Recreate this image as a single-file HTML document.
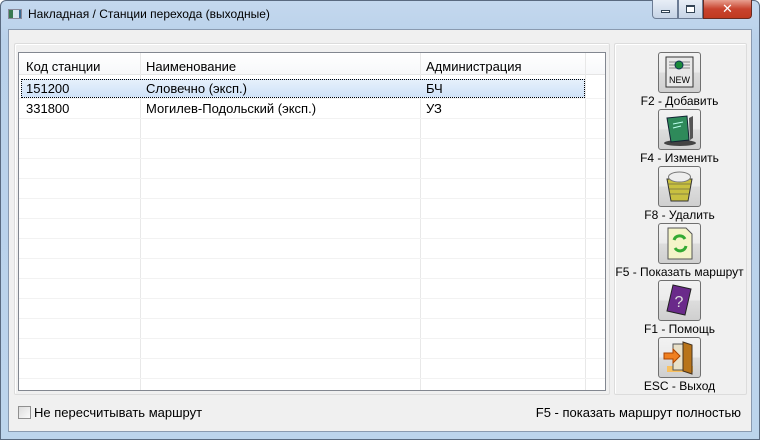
<!DOCTYPE html>
<html><head><meta charset="utf-8"><style>
*{margin:0;padding:0;box-sizing:border-box}
body{width:760px;height:440px;overflow:hidden;font-family:"Liberation Sans","DejaVu Sans",sans-serif;font-size:12px;color:#000;background:#fff}
.frame{position:absolute;left:0;top:0;width:760px;height:440px;background:linear-gradient(180deg,#c4d8ee 0,#b9d1ea 40px,#bcd4ec 100%);border:1px solid #5a6a80;border-radius:6px 6px 0 0}
.title{position:absolute;left:28px;top:7px;font-size:12px;color:#000}
.ticon{position:absolute;left:8px;top:9px;width:14px;height:10px;background:linear-gradient(90deg,#3a7a50 0,#3a7a50 4px,#d8e4ee 4px,#d8e4ee 10px,#3a6a90 10px);border:1px solid #889}
.client{position:absolute;left:8px;top:29px;width:744px;height:403px;background:#f0f0f0;border:1px solid #8a9ab0}
.panel{position:absolute;border:1px solid #dcdcdc;border-radius:2px;box-shadow:inset 1px 1px 0 #fff}
.grid{position:absolute;left:18px;top:52px;width:588px;height:339px;background:#fff;border:1px solid #828790;overflow:hidden;font-size:13px}
.vl{position:absolute;top:0;bottom:0;width:1px;background:#f0f0f0}
.hl{position:absolute;left:0;right:0;height:1px;background:#f2f2f2}
.hdr{position:absolute;top:0;left:0;right:0;height:22px;background:linear-gradient(#fff,#f7f8fa);border-bottom:1px solid #e5e5e5}
.t{position:absolute;white-space:nowrap}
.sel{position:absolute;left:2px;top:26px;width:564px;height:19px;background:linear-gradient(#e6f0fb,#cfe2f8);border:1px dotted #000}
.btn{position:absolute;left:658px;width:43px;height:41px;border:1px solid #707070;border-radius:3px;background:linear-gradient(#f2f2f2 0,#ebebeb 50%,#dddddd 50%,#cfcfcf 100%)}
.lbl{position:absolute;width:145px;text-align:center;left:607px;font-size:12px}
.winbtns{position:absolute;left:652px;top:0;width:100px;height:19px}
</style></head><body>
<div class="frame"></div>
<div class="ticon"></div>
<div class="title">Накладная / Станции перехода (выходные)</div>
<div class="winbtns">
 <div style="position:absolute;left:0;top:0;width:26px;height:19px;border:1px solid #6c7c94;border-top:none;border-radius:0 0 0 4px;background:linear-gradient(#e8eef6,#c6d4e6)"><div style="position:absolute;left:8px;top:10px;width:9px;height:3px;background:#fff;border:1px solid #345"></div></div>
 <div style="position:absolute;left:26px;top:0;width:25px;height:19px;border:1px solid #6c7c94;border-top:none;background:linear-gradient(#e8eef6,#c6d4e6)"><div style="position:absolute;left:7px;top:5px;width:9px;height:8px;border:1px solid #345;border-top-width:2px;background:#fff"></div></div>
 <div style="position:absolute;left:51px;top:0;width:49px;height:19px;border:1px solid #6a2a20;border-top:none;border-radius:0 0 4px 0;background:linear-gradient(#e8a090,#c8432e 50%,#c03a20);color:#fff;font-weight:bold;text-align:center;font-size:13px;line-height:17px">✕</div>
</div>
<div class="client"></div>
<div class="panel" style="left:14px;top:43px;width:596px;height:352px"></div>
<div class="panel" style="left:614px;top:43px;width:133px;height:352px"></div>
<div class="grid">
 <div class="hdr"></div>
 <div class="vl" style="left:121px;background:#e8e8e8"></div>
 <div class="vl" style="left:401px;background:#e8e8e8"></div>
 <div class="vl" style="left:566px;background:#e8e8e8"></div>
 <div class="hl" style="top:45px"></div><div class="hl" style="top:65px"></div><div class="hl" style="top:85px"></div><div class="hl" style="top:105px"></div><div class="hl" style="top:125px"></div><div class="hl" style="top:145px"></div><div class="hl" style="top:165px"></div><div class="hl" style="top:185px"></div><div class="hl" style="top:205px"></div><div class="hl" style="top:225px"></div><div class="hl" style="top:245px"></div><div class="hl" style="top:265px"></div><div class="hl" style="top:285px"></div><div class="hl" style="top:305px"></div><div class="hl" style="top:325px"></div>
 <div class="sel"></div>
 <div class="t" style="left:7px;top:6px">Код станции</div>
 <div class="t" style="left:127px;top:6px">Наименование</div>
 <div class="t" style="left:407px;top:6px">Администрация</div>
 <div class="t" style="left:7px;top:28px">151200</div>
 <div class="t" style="left:127px;top:28px">Словечно (эксп.)</div>
 <div class="t" style="left:407px;top:28px">БЧ</div>
 <div class="t" style="left:7px;top:48px">331800</div>
 <div class="t" style="left:127px;top:48px">Могилев-Подольский (эксп.)</div>
 <div class="t" style="left:407px;top:48px">УЗ</div>
</div>

<div class="btn" style="top:52px"><svg width="41" height="39"><rect x="7" y="4" width="27" height="30" fill="#e8e8e8" stroke="#333"/><g stroke="#888"><line x1="10" y1="9" x2="31" y2="9"/><line x1="10" y1="12" x2="31" y2="12"/><line x1="10" y1="15" x2="31" y2="15"/></g><circle cx="20" cy="12" r="4" fill="#1a8a3a" stroke="#135"/><text x="20.5" y="30" font-size="9" text-anchor="middle" font-family="Liberation Sans">NEW</text></svg></div>
<div class="lbl" style="top:94px">F2 - Добавить</div>
<div class="btn" style="top:109px"><svg width="41" height="39"><ellipse cx="21" cy="33" rx="16" ry="3" fill="#444"/><path d="M8 8 L28 6 L30 30 L12 32 Z" fill="#2e8a5a" stroke="#123"/><path d="M30 8 L34 6 L34 28 L31 30 Z" fill="#555"/><g stroke="#bfe" ><line x1="14" y1="14" x2="24" y2="12"/><line x1="14" y1="18" x2="22" y2="16"/></g></svg></div>
<div class="lbl" style="top:151px">F4 - Изменить</div>
<div class="btn" style="top:166px"><svg width="41" height="39"><path d="M8 12 L33 12 L29 34 L12 34 Z" fill="#c8c040" stroke="#333"/><g stroke="#444" stroke-width=".6"><line x1="9" y1="17" x2="32" y2="17"/><line x1="10" y1="22" x2="31" y2="22"/><line x1="11" y1="27" x2="30" y2="27"/></g><ellipse cx="20.5" cy="10" rx="11" ry="5" fill="#eee" stroke="#777"/></svg></div>
<div class="lbl" style="top:208px">F8 - Удалить</div>
<div class="btn" style="top:223px"><svg width="41" height="39"><path d="M9 4 L27 4 L33 10 L33 35 L9 35 Z" fill="#f4f4c8" stroke="#555"/><path d="M15 16 A6 6 0 0 1 26 15" stroke="#3a3" stroke-width="3" fill="none"/><path d="M27 22 A6 6 0 0 1 16 24" stroke="#3a3" stroke-width="3" fill="none"/></svg></div>
<div class="lbl" style="top:265px">F5 - Показать маршрут</div>
<div class="btn" style="top:280px"><svg width="41" height="39"><path d="M14 4 L32 8 L26 34 L8 30 Z" fill="#6a2a8a" stroke="#222"/><text x="20" y="26" font-size="16" fill="#ddd" text-anchor="middle" font-family="Liberation Sans">?</text></svg></div>
<div class="lbl" style="top:322px">F1 - Помощь</div>
<div class="btn" style="top:337px"><svg width="41" height="39"><rect x="8" y="28" width="26" height="6" fill="#f8c060"/><rect x="14" y="6" width="14" height="26" fill="#e8e0c8" stroke="#555"/><path d="M24 4 L33 7 L33 36 L24 33 Z" fill="#b8741a" stroke="#432"/><path d="M5 15 L14 15 L14 11 L21 18 L14 25 L14 21 L5 21 Z" fill="#f08020" stroke="#a40"/></svg></div>
<div class="lbl" style="top:379px">ESC - Выход</div>

<div style="position:absolute;left:18px;top:406px;width:13px;height:13px;border:1px solid #8f8f8f;background:linear-gradient(135deg,#dcdcdc,#fafafa)"></div>
<div class="t" style="left:34px;top:405px;font-size:13px">Не пересчитывать маршрут</div>
<div class="t" style="right:19px;top:405px;font-size:13px">F5 - показать маршрут полностью</div>
</body></html>
